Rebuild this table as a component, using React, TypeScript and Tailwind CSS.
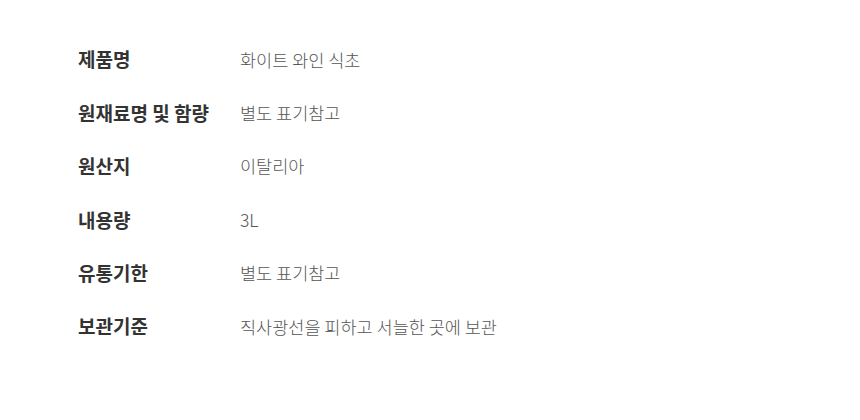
import React from "react";

const rows: [string, string][] = [
  ["제품명", "화이트 와인 식초"],
  ["원재료명 및 함량", "별도 표기참고"],
  ["원산지", "이탈리아"],
  ["내용량", "3L"],
  ["유통기한", "별도 표기참고"],
  ["보관기준", "직사광선을 피하고 서늘한 곳에 보관"],
];

export default function App() {
  return (
    <div
      className="w-[860px] h-[420px] bg-white pl-[78px] pt-[33px]"
      style={{ fontFamily: '"Noto Sans CJK KR", "Noto Sans", sans-serif' }}
    >
      <div className="flex flex-col">
        {rows.map(([k, v]) => (
          <div key={k} className="flex items-center h-[53.4px]">
            <div className="w-[162px] text-[19px] font-bold text-[#333333]">{k}</div>
            <div className="text-[17.5px] font-light text-[#555555]">{v}</div>
          </div>
        ))}
      </div>
    </div>
  );
}
